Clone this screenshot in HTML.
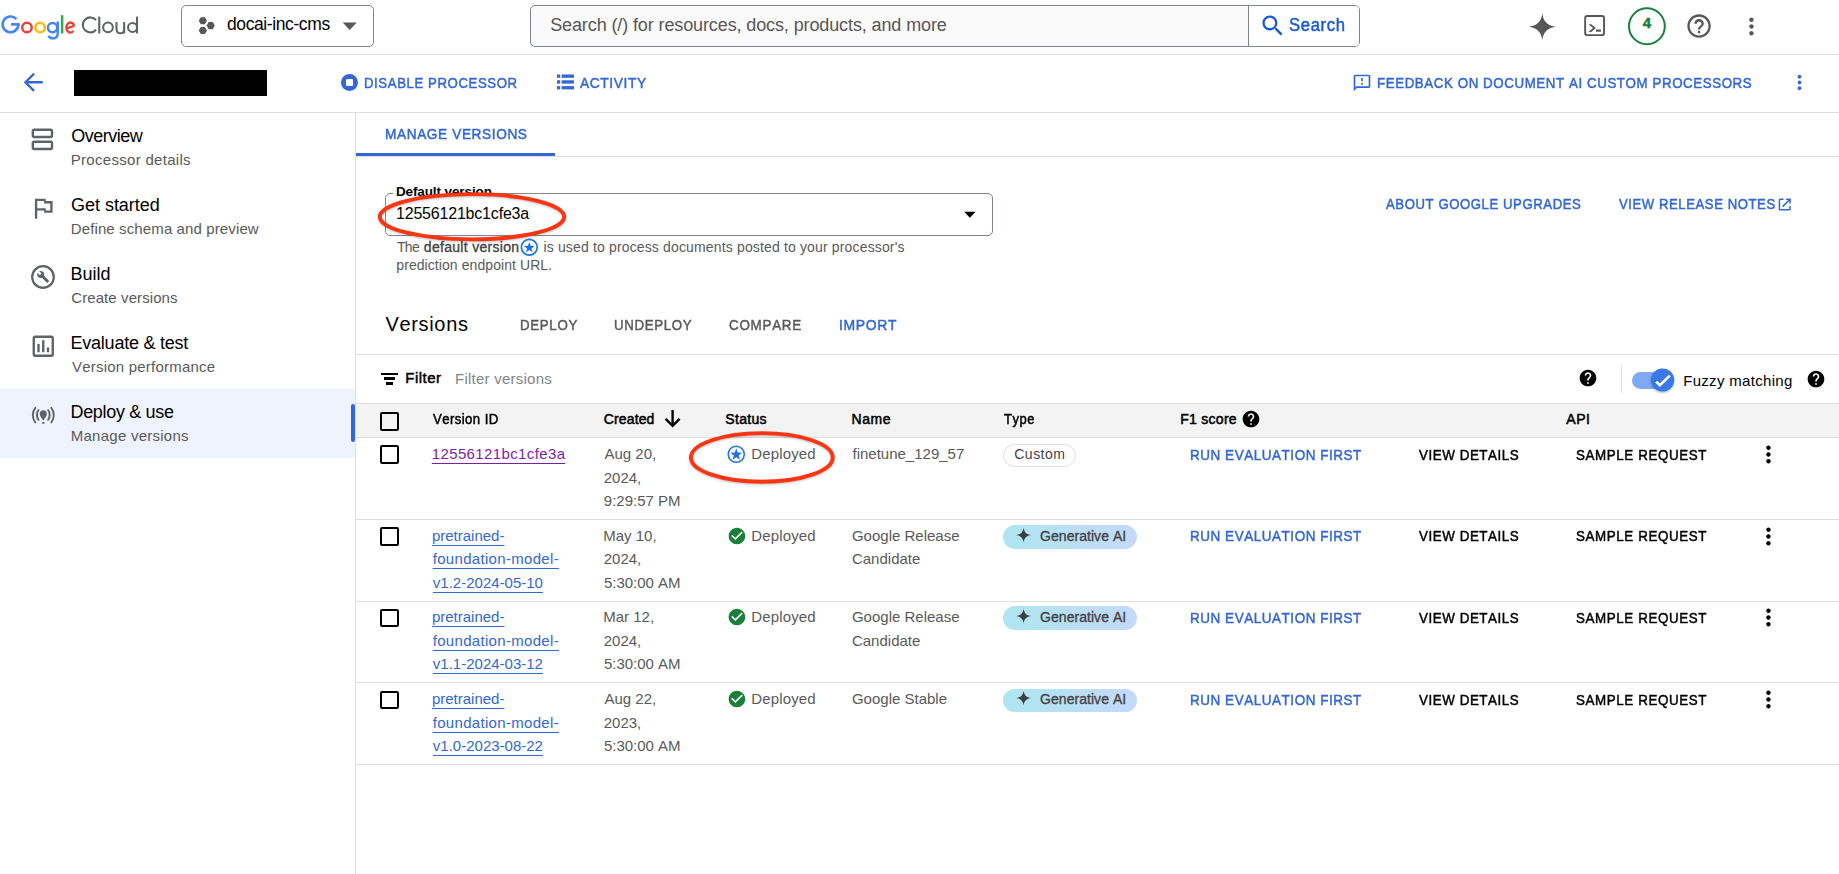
<!DOCTYPE html>
<html><head><meta charset="utf-8"><style>
html,body{margin:0;padding:0;background:#fff;width:1839px;height:874px;overflow:hidden;position:relative}
.t{position:absolute;white-space:pre;line-height:0;font-family:"Liberation Sans",sans-serif;font-kerning:none}
svg{overflow:visible}
</style></head><body>
<div style="position:absolute;left:0px;top:54px;width:1839px;height:1px;background:#dedede"></div>
<div style="position:absolute;left:0px;top:112px;width:1839px;height:1px;background:#dedede"></div>
<div style="position:absolute;left:0px;top:389px;width:355px;height:69px;background:#eef3fd"></div>
<div style="position:absolute;left:351px;top:404px;width:4px;height:38px;background:#3367d6;border-radius:2px"></div>
<div style="position:absolute;left:355px;top:113px;width:1px;height:761px;background:#dedede"></div>
<div style="position:absolute;left:181px;top:5px;width:193px;height:42px;box-sizing:border-box;border:1px solid #80868b;border-radius:5px"></div>
<div style="position:absolute;left:530px;top:5px;width:830px;height:42px;box-sizing:border-box;border:1px solid #80868b;border-radius:5px;background:#fafafa;overflow:hidden"></div>
<div style="position:absolute;left:1249px;top:6px;width:110px;height:40px;background:#fff;border-radius:0 4px 4px 0"></div>
<div style="position:absolute;left:1248px;top:6px;width:1px;height:40px;background:#80868b"></div>
<div style="position:absolute;left:356px;top:156px;width:1483px;height:1px;background:#dedede"></div>
<div style="position:absolute;left:356px;top:153px;width:199px;height:3px;background:#3367d6"></div>
<div style="position:absolute;left:385px;top:193px;width:608px;height:43px;box-sizing:border-box;border:1px solid #80868b;border-radius:5px"></div>
<div style="position:absolute;left:393px;top:190px;width:102px;height:6px;background:#fff"></div>
<div style="position:absolute;left:356px;top:354px;width:1483px;height:1px;background:#dedede"></div>
<div style="position:absolute;left:1621px;top:365px;width:1px;height:28px;background:#dedede"></div>
<div style="position:absolute;left:356px;top:403px;width:1483px;height:35px;box-sizing:border-box;background:#f3f3f3;border-top:1px solid #dedede;border-bottom:1px solid #dedede"></div>
<div style="position:absolute;left:356px;top:519px;width:1483px;height:1px;background:#dedede"></div>
<div style="position:absolute;left:356px;top:601px;width:1483px;height:1px;background:#dedede"></div>
<div style="position:absolute;left:356px;top:682px;width:1483px;height:1px;background:#dedede"></div>
<div style="position:absolute;left:356px;top:764px;width:1483px;height:1px;background:#dedede"></div>
<svg style="position:absolute;left:0px;top:0px;" width="145" height="45" viewBox="0 0 145 45"><path d="M16.42 19.06 A7.9 7.9 0 1 0 18.45 24.35" fill="none" stroke="#4285f4" stroke-width="2.6"/><rect x="11.1" y="23.05" width="8.6" height="2.6" fill="#4285f4"/><circle cx="26.95" cy="27.55" r="4.75" fill="none" stroke="#ea4335" stroke-width="2.45"/><circle cx="40.15" cy="27.55" r="4.75" fill="none" stroke="#fbbc04" stroke-width="2.45"/><circle cx="52.55" cy="27.55" r="4.65" fill="none" stroke="#4285f4" stroke-width="2.45"/><rect x="56.5" y="21.5" width="2.45" height="12.3" fill="#4285f4"/><path d="M57.72 33.5 C57.72 36.9 55.7 38.35 52.9 38.35 C50.9 38.35 49.3 37.4 48.5 35.9" fill="none" stroke="#4285f4" stroke-width="2.45"/><rect x="60.85" y="15.2" width="2.5" height="18.3" fill="#34a853"/><path d="M66.3 28.7 L74.5 25.75" fill="none" stroke="#ea4335" stroke-width="2.35"/><path d="M74.25 25.68 A4.1 5.0 0 1 0 73.50 30.90" fill="none" stroke="#ea4335" stroke-width="2.35"/><path d="M96.05 20.08 A7.5 7.5 0 1 0 96.05 29.72" fill="none" stroke="#5f6368" stroke-width="2.05"/><rect x="98.2" y="16.6" width="2.1" height="16.8" fill="#5f6368"/><circle cx="108.0" cy="27.4" r="4.85" fill="none" stroke="#5f6368" stroke-width="2.05"/><path d="M116.5 21.9 V28.4 C116.5 31.6 118.2 33.3 120.6 33.3 C123 33.3 124.15 31.6 124.15 28.4 V21.9 M124.15 28 V33.4" fill="none" stroke="#5f6368" stroke-width="2.05"/><circle cx="132.55" cy="27.4" r="4.5" fill="none" stroke="#5f6368" stroke-width="2.05"/><rect x="136" y="16.6" width="2.05" height="16.8" fill="#5f6368"/></svg>
<svg style="position:absolute;left:196px;top:14px;" width="22" height="22" viewBox="0 0 22 22"><polygon points="10.95,6.80 8.90,10.35 4.80,10.35 2.75,6.80 4.80,3.25 8.90,3.25" fill="#575757"/><polygon points="10.95,16.45 8.90,20.00 4.80,20.00 2.75,16.45 4.80,12.90 8.90,12.90" fill="#575757"/><polygon points="18.80,11.60 16.75,15.15 12.65,15.15 10.60,11.60 12.65,8.05 16.75,8.05" fill="#575757"/></svg>
<svg style="position:absolute;left:342px;top:22px;" width="15" height="9" viewBox="0 0 15 9"><polygon points="0.7,0.5 14.7,0.5 7.7,8" fill="#575757"/></svg>
<svg style="position:absolute;left:1259.2px;top:11.75px;" width="27.6" height="27.6" viewBox="0 0 24 24"><path fill="#1a5ad6" d="M15.5 14h-.79l-.28-.27C15.41 12.59 16 11.11 16 9.5 16 5.91 13.09 3 9.5 3S3 5.91 3 9.5 5.91 16 9.5 16c1.61 0 3.09-.59 4.23-1.57l.27.28v.79l5 4.99L20.49 19l-4.99-5zm-6 0C7.01 14 5 11.99 5 9.5S7.01 5 9.5 5 14 7.01 14 9.5 11.99 14 9.5 14z"/></svg>
<svg style="position:absolute;left:1529.2px;top:13.0px;" width="27" height="27.6" viewBox="0 0 27 27.6"><path fill="#575757" d="M13.3 0 C14 6.8 16.8 12.2 26.6 13.8 C16.8 15.4 14 20.8 13.3 27.6 C12.6 20.8 9.8 15.4 0 13.8 C9.8 12.2 12.6 6.8 13.3 0Z"/></svg>
<svg style="position:absolute;left:1583px;top:14px;" width="23" height="23" viewBox="0 0 23 23"><rect x="2.15" y="2.05" width="18.9" height="19.1" rx="2.2" fill="none" stroke="#575757" stroke-width="1.9"/><polygon points="5.5,10.2 8.3,10.2 12.9,14 8.3,17.9 5.5,17.9 10.0,14" fill="#575757"/><rect x="13" y="15.5" width="4.9" height="2.2" fill="#575757"/></svg>
<svg style="position:absolute;left:1627px;top:5.5px;" width="40" height="40" viewBox="0 0 40 40"><circle cx="19.9" cy="20.25" r="17.9" fill="none" stroke="#188038" stroke-width="2"/></svg>
<svg style="position:absolute;left:1685.05px;top:11.85px;" width="28.2" height="28.2" viewBox="0 0 24 24"><path fill="#575757" d="M11 18h2v-2h-2v2zm1-16C6.48 2 2 6.48 2 12s4.48 10 10 10 10-4.48 10-10S17.52 2 12 2zm0 18c-4.41 0-8-3.59-8-8s3.59-8 8-8 8 3.59 8 8-3.59 8-8 8zm0-14c-2.21 0-4 1.79-4 4h2c0-1.1.9-2 2-2s2 .9 2 2c0 2-3 1.75-3 5h2c0-2.25 3-2.5 3-5 0-2.21-1.79-4-4-4z"/></svg>
<svg style="position:absolute;left:1737.6px;top:12.8px;" width="26.9" height="26.9" viewBox="0 0 24 24"><path fill="#575757" d="M12 8c1.1 0 2-.9 2-2s-.9-2-2-2-2 .9-2 2 .9 2 2 2zm0 2c-1.1 0-2 .9-2 2s.9 2 2 2 2-.9 2-2-.9-2-2-2zm0 6c-1.1 0-2 .9-2 2s.9 2 2 2 2-.9 2-2-.9-2-2-2z"/></svg>
<svg style="position:absolute;left:19.25px;top:68.25px;" width="28.5" height="28.5" viewBox="0 0 24 24"><path fill="#3367d6" d="M20 11H7.83l5.59-5.59L12 4l-8 8 8 8 1.41-1.41L7.83 13H20v-2z"/></svg>
<div style="position:absolute;left:74px;top:70px;width:193px;height:26px;background:#000"></div>
<svg style="position:absolute;left:340px;top:73px;" width="19" height="19" viewBox="0 0 19 19"><circle cx="9.5" cy="9.5" r="8.5" fill="#3367d6"/><rect x="6" y="6" width="7" height="7" rx="1" fill="#fff"/></svg>
<svg style="position:absolute;left:557px;top:74px;" width="18" height="16" viewBox="0 0 18 16"><rect x="0" y="0.5" width="3.2" height="3.3" fill="#3367d6"/><rect x="4.6" y="0.5" width="12.4" height="3.3" fill="#3367d6"/><rect x="0" y="6.3" width="3.2" height="3.3" fill="#3367d6"/><rect x="4.6" y="6.3" width="12.4" height="3.3" fill="#3367d6"/><rect x="0" y="12.1" width="3.2" height="3.3" fill="#3367d6"/><rect x="4.6" y="12.1" width="12.4" height="3.3" fill="#3367d6"/></svg>
<svg style="position:absolute;left:1352.3px;top:73.3px;" width="20" height="20" viewBox="0 0 24 24"><path fill="#3367d6" d="M20 2H4c-1.1 0-1.99.9-1.99 2L2 22l4-4h14c1.1 0 2-.9 2-2V4c0-1.1-.9-2-2-2zm0 14H5.17l-.59.59-.58.58V4h16v12zM11 12h2v2h-2zm0-6h2v4h-2z"/></svg>
<svg style="position:absolute;left:1787.9px;top:71.2px;" width="23" height="23" viewBox="0 0 24 24"><path fill="#3367d6" d="M12 8c1.1 0 2-.9 2-2s-.9-2-2-2-2 .9-2 2 .9 2 2 2zm0 2c-1.1 0-2 .9-2 2s.9 2 2 2 2-.9 2-2-.9-2-2-2zm0 6c-1.1 0-2 .9-2 2s.9 2 2 2 2-.9 2-2-.9-2-2-2z"/></svg>
<svg style="position:absolute;left:27.8px;top:124.9px;" width="28.8" height="28.8" viewBox="0 0 24 24"><path fill="#5f6368" d="M19 13H5c-1.1 0-2 .9-2 2v4c0 1.1.9 2 2 2h14c1.1 0 2-.9 2-2v-4c0-1.1-.9-2-2-2zm0 6H5v-4h14v4zm0-16H5c-1.1 0-2 .9-2 2v4c0 1.1.9 2 2 2h14c1.1 0 2-.9 2-2V5c0-1.1-.9-2-2-2zm0 6H5V5h14v4z"/></svg>
<svg style="position:absolute;left:29.1px;top:194.2px;" width="28.3" height="28.3" viewBox="0 0 24 24"><path fill="#5f6368" fill-rule="evenodd" d="M5 4H14.2V6H20V16H12.8V14H7V21H5Z M7 6H12.8V8H18V14H14.2V12H7Z"/></svg>
<svg style="position:absolute;left:31px;top:265px;" width="24" height="24" viewBox="0 0 24 24"><circle cx="12" cy="12" r="10.8" fill="none" stroke="#5f6368" stroke-width="2.2"/><path transform="translate(5.6 5.3) scale(0.545)" fill="#5f6368" d="M22.7 19l-9.1-9.1c.9-2.3.4-5-1.5-6.9-2-2-5-2.4-7.4-1.3L9 6 6 9 1.6 4.7C.4 7.1.9 10.1 2.9 12.1c1.9 1.9 4.6 2.4 6.9 1.5l9.1 9.1c.4.4 1 .4 1.4 0l2.3-2.3c.5-.4.5-1.1.1-1.4z"/></svg>
<svg style="position:absolute;left:29px;top:331.9px;" width="28.5" height="28.5" viewBox="0 0 24 24"><path fill="#5f6368" d="M19 3H5c-1.1 0-2 .9-2 2v14c0 1.1.9 2 2 2h14c1.1 0 2-.9 2-2V5c0-1.1-.9-2-2-2zm0 16H5V5h14v14zM7 10h2v7H7zm4-3h2v10h-2zm4 6h2v4h-2z"/></svg>
<svg style="position:absolute;left:31px;top:405px;" width="25" height="20" viewBox="0 0 25 20"><path d="M4.3 2.8 C1.0 6.6 1.0 13.6 4.3 17.4 M20.3 2.8 C23.6 6.6 23.6 13.6 20.3 17.4 M7.5 5.2 C5.4 7.7 5.4 12.3 7.5 14.8 M17.1 5.2 C19.2 7.7 19.2 12.3 17.1 14.8" fill="none" stroke="#5f6368" stroke-width="1.9" stroke-linecap="round"/><path fill="#5f6368" d="M12.3 5.3 C14.5 5.3 15.9 6.9 15.9 8.9 C15.9 11.1 14 12.6 12.3 15.5 C10.6 12.6 8.7 11.1 8.7 8.9 C8.7 6.9 10.1 5.3 12.3 5.3Z"/><rect x="11.1" y="16.9" width="2.4" height="1.8" rx="0.5" fill="#5f6368"/></svg>
<svg style="position:absolute;left:963px;top:211px;" width="14" height="8" viewBox="0 0 14 8"><polygon points="1.2,0.8 12.6,0.8 6.9,6.8" fill="#000000"/></svg>
<svg style="position:absolute;left:520px;top:238.2px;" width="18.6" height="18.6" viewBox="0 0 24 24"><circle cx="12" cy="12" r="10.2" fill="none" stroke="#1a73e8" stroke-width="2.2"/><path d="M12.00 5.10 L13.76 10.07 L19.04 10.21 L14.85 13.43 L16.35 18.49 L12.00 15.50 L7.65 18.49 L9.15 13.43 L4.96 10.21 L10.24 10.07Z" fill="#1a73e8"/></svg>
<svg style="position:absolute;left:1777px;top:196.5px;" width="16" height="15" viewBox="0 0 16 15"><path d="M6.5 2.3 H3.2 C2.8 2.3 2.4 2.7 2.4 3.1 V12 C2.4 12.4 2.8 12.8 3.2 12.8 H12.2 C12.6 12.8 13 12.4 13 12 V8.9" fill="none" stroke="#3367d6" stroke-width="1.5"/><path d="M5.6 9.6 L13 2.3 M9.1 2.3 H13.05 V6.4" fill="none" stroke="#3367d6" stroke-width="1.5"/></svg>
<div style="position:absolute;left:381.4px;top:372.6px;width:16.8px;height:2.5px;background:#000"></div>
<div style="position:absolute;left:383.8px;top:377.4px;width:11.6px;height:2.4px;background:#000"></div>
<div style="position:absolute;left:386.2px;top:382.2px;width:6.8px;height:2.4px;background:#000"></div>
<svg style="position:absolute;left:1577.6299999999999px;top:367.72999999999996px;" width="20" height="20" viewBox="0 0 24 24"><path fill="#000" d="M12 2C6.48 2 2 6.48 2 12s4.48 10 10 10 10-4.48 10-10S17.52 2 12 2zm1 17h-2v-2h2v2zm2.07-7.75l-.9.92C13.45 12.9 13 13.5 13 15h-2v-.5c0-1.1.45-2.1 1.17-2.83l1.24-1.26c.37-.36.59-.86.59-1.41 0-1.1-.9-2-2-2s-2 .9-2 2H8c0-2.21 1.79-4 4-4s4 1.79 4 4c0 .88-.36 1.68-.93 2.25z"/></svg>
<svg style="position:absolute;left:1805.6299999999999px;top:368.53px;" width="20" height="20" viewBox="0 0 24 24"><path fill="#000" d="M12 2C6.48 2 2 6.48 2 12s4.48 10 10 10 10-4.48 10-10S17.52 2 12 2zm1 17h-2v-2h2v2zm2.07-7.75l-.9.92C13.45 12.9 13 13.5 13 15h-2v-.5c0-1.1.45-2.1 1.17-2.83l1.24-1.26c.37-.36.59-.86.59-1.41 0-1.1-.9-2-2-2s-2 .9-2 2H8c0-2.21 1.79-4 4-4s4 1.79 4 4c0 .88-.36 1.68-.93 2.25z"/></svg>
<svg style="position:absolute;left:1240.73px;top:408.83px;" width="20" height="20" viewBox="0 0 24 24"><path fill="#000" d="M12 2C6.48 2 2 6.48 2 12s4.48 10 10 10 10-4.48 10-10S17.52 2 12 2zm1 17h-2v-2h2v2zm2.07-7.75l-.9.92C13.45 12.9 13 13.5 13 15h-2v-.5c0-1.1.45-2.1 1.17-2.83l1.24-1.26c.37-.36.59-.86.59-1.41 0-1.1-.9-2-2-2s-2 .9-2 2H8c0-2.21 1.79-4 4-4s4 1.79 4 4c0 .88-.36 1.68-.93 2.25z"/></svg>
<div style="position:absolute;left:1632px;top:372px;width:34px;height:17px;background:#7da9f5;border-radius:8.5px"></div>
<svg style="position:absolute;left:1648px;top:365px;" width="30" height="30" viewBox="0 0 30 30"><defs><filter id="sh" x="-30%" y="-30%" width="160%" height="160%"><feDropShadow dx="0" dy="1" stdDeviation="1" flood-opacity="0.3"/></filter></defs><circle cx="14.6" cy="15" r="11.6" fill="#3b78e7" filter="url(#sh)"/><path d="M8.1 16.6 L11.9 20.3 L21.8 10.6" fill="none" stroke="#fff" stroke-width="2.6"/></svg>
<svg style="position:absolute;left:660px;top:405px;" width="25" height="25" viewBox="0 0 25 25"><path d="M12.6 5 V20.2" stroke="#000" stroke-width="2.4" fill="none"/><path d="M5.6 13.9 L12.6 20.9 L19.6 13.9" stroke="#000" stroke-width="2.4" fill="none"/></svg>
<div style="position:absolute;left:380.4px;top:412.4px;width:18.4px;height:18.4px;box-sizing:border-box;border:2px solid #000000;border-radius:2px"></div>
<div style="position:absolute;left:380.4px;top:445.2px;width:18.4px;height:18.4px;box-sizing:border-box;border:2px solid #000000;border-radius:2px"></div>
<div style="position:absolute;left:380.4px;top:527.3px;width:18.4px;height:18.4px;box-sizing:border-box;border:2px solid #000000;border-radius:2px"></div>
<div style="position:absolute;left:380.4px;top:609.1px;width:18.4px;height:18.4px;box-sizing:border-box;border:2px solid #000000;border-radius:2px"></div>
<div style="position:absolute;left:380.4px;top:690.9px;width:18.4px;height:18.4px;box-sizing:border-box;border:2px solid #000000;border-radius:2px"></div>
<svg style="position:absolute;left:726.2px;top:443.6px;" width="20.5" height="20.5" viewBox="0 0 24 24"><circle cx="12" cy="12" r="9.4" fill="none" stroke="#1a73e8" stroke-width="1.8"/><path d="M12.00 5.10 L13.76 10.07 L19.04 10.21 L14.85 13.43 L16.35 18.49 L12.00 15.50 L7.65 18.49 L9.15 13.43 L4.96 10.21 L10.24 10.07Z" fill="#1a73e8"/></svg>
<div style="position:absolute;left:1002.9px;top:443.7px;width:73px;height:23px;box-sizing:border-box;border:1px solid #dedede;border-radius:12px"></div>
<svg style="position:absolute;left:1754.8999999999999px;top:440.7px;" width="26.9" height="26.9" viewBox="0 0 24 24"><path fill="#000000" d="M12 8c1.1 0 2-.9 2-2s-.9-2-2-2-2 .9-2 2 .9 2 2 2zm0 2c-1.1 0-2 .9-2 2s.9 2 2 2 2-.9 2-2-.9-2-2-2zm0 6c-1.1 0-2 .9-2 2s.9 2 2 2 2-.9 2-2-.9-2-2-2z"/></svg>
<svg style="position:absolute;left:726.74px;top:525.84px;" width="19.9" height="19.9" viewBox="0 0 24 24"><path d="M12 2C6.48 2 2 6.48 2 12s4.48 10 10 10 10-4.48 10-10S17.52 2 12 2zm-2 15l-5-5 1.41-1.41L10 14.17l7.59-7.59L19 8l-9 9z" fill="#188038"/></svg>
<div style="position:absolute;left:1002.9px;top:525.2px;width:134px;height:23.4px;background:linear-gradient(90deg,#aee6f0,#c5d9fb);border-radius:12px"></div>
<svg style="position:absolute;left:1015.8px;top:528.0px;" width="15.2" height="14.2" viewBox="0 0 15.2 14.2"><path fill="#3c4043" d="M7.6 0 C8.4 4.3 10.4 6.4 15.2 7.1 C10.4 7.8 8.4 9.9 7.6 14.2 C6.8 9.9 4.8 7.8 0 7.1 C4.8 6.4 6.8 4.3 7.6 0Z"/></svg>
<svg style="position:absolute;left:1754.8999999999999px;top:522.5px;" width="26.9" height="26.9" viewBox="0 0 24 24"><path fill="#000000" d="M12 8c1.1 0 2-.9 2-2s-.9-2-2-2-2 .9-2 2 .9 2 2 2zm0 2c-1.1 0-2 .9-2 2s.9 2 2 2 2-.9 2-2-.9-2-2-2zm0 6c-1.1 0-2 .9-2 2s.9 2 2 2 2-.9 2-2-.9-2-2-2z"/></svg>
<svg style="position:absolute;left:726.74px;top:607.0400000000001px;" width="19.9" height="19.9" viewBox="0 0 24 24"><path d="M12 2C6.48 2 2 6.48 2 12s4.48 10 10 10 10-4.48 10-10S17.52 2 12 2zm-2 15l-5-5 1.41-1.41L10 14.17l7.59-7.59L19 8l-9 9z" fill="#188038"/></svg>
<div style="position:absolute;left:1002.9px;top:606.4000000000001px;width:134px;height:23.4px;background:linear-gradient(90deg,#aee6f0,#c5d9fb);border-radius:12px"></div>
<svg style="position:absolute;left:1015.8px;top:609.2px;" width="15.2" height="14.2" viewBox="0 0 15.2 14.2"><path fill="#3c4043" d="M7.6 0 C8.4 4.3 10.4 6.4 15.2 7.1 C10.4 7.8 8.4 9.9 7.6 14.2 C6.8 9.9 4.8 7.8 0 7.1 C4.8 6.4 6.8 4.3 7.6 0Z"/></svg>
<svg style="position:absolute;left:1754.8999999999999px;top:603.7px;" width="26.9" height="26.9" viewBox="0 0 24 24"><path fill="#000000" d="M12 8c1.1 0 2-.9 2-2s-.9-2-2-2-2 .9-2 2 .9 2 2 2zm0 2c-1.1 0-2 .9-2 2s.9 2 2 2 2-.9 2-2-.9-2-2-2zm0 6c-1.1 0-2 .9-2 2s.9 2 2 2 2-.9 2-2-.9-2-2-2z"/></svg>
<svg style="position:absolute;left:726.74px;top:689.14px;" width="19.9" height="19.9" viewBox="0 0 24 24"><path d="M12 2C6.48 2 2 6.48 2 12s4.48 10 10 10 10-4.48 10-10S17.52 2 12 2zm-2 15l-5-5 1.41-1.41L10 14.17l7.59-7.59L19 8l-9 9z" fill="#188038"/></svg>
<div style="position:absolute;left:1002.9px;top:688.5px;width:134px;height:23.4px;background:linear-gradient(90deg,#aee6f0,#c5d9fb);border-radius:12px"></div>
<svg style="position:absolute;left:1015.8px;top:691.3px;" width="15.2" height="14.2" viewBox="0 0 15.2 14.2"><path fill="#3c4043" d="M7.6 0 C8.4 4.3 10.4 6.4 15.2 7.1 C10.4 7.8 8.4 9.9 7.6 14.2 C6.8 9.9 4.8 7.8 0 7.1 C4.8 6.4 6.8 4.3 7.6 0Z"/></svg>
<svg style="position:absolute;left:1754.8999999999999px;top:685.8px;" width="26.9" height="26.9" viewBox="0 0 24 24"><path fill="#000000" d="M12 8c1.1 0 2-.9 2-2s-.9-2-2-2-2 .9-2 2 .9 2 2 2zm0 2c-1.1 0-2 .9-2 2s.9 2 2 2 2-.9 2-2-.9-2-2-2zm0 6c-1.1 0-2 .9-2 2s.9 2 2 2 2-.9 2-2-.9-2-2-2z"/></svg>
<div class="t" style="left:226.97px;top:24.02px;font-size:17.5px;color:#000000;letter-spacing:-0.398px;">docai-inc-cms</div>
<div class="t" style="left:550.18px;top:25.02px;font-size:18px;color:#575757;letter-spacing:-0.113px;">Search (/) for resources, docs, products, and more</div>
<div class="t" style="left:1289.34px;top:25.02px;font-size:18px;color:#1a5ad6;transform:scaleX(0.9256);transform-origin:0 0;letter-spacing:0.703px;-webkit-text-stroke:0.5px #1a5ad6;">Search</div>
<div class="t" style="left:363.82px;top:82.52px;font-size:15.5px;color:#3367d6;transform:scaleX(0.8530);transform-origin:0 0;letter-spacing:0.666px;-webkit-text-stroke:0.5px #3367d6;">DISABLE PROCESSOR</div>
<div class="t" style="left:580.27px;top:82.52px;font-size:15.5px;color:#3367d6;transform:scaleX(0.8914);transform-origin:0 0;letter-spacing:0.633px;-webkit-text-stroke:0.5px #3367d6;">ACTIVITY</div>
<div class="t" style="left:1377.20px;top:82.52px;font-size:15.5px;color:#3367d6;transform:scaleX(0.8613);transform-origin:0 0;letter-spacing:0.650px;-webkit-text-stroke:0.5px #3367d6;">FEEDBACK ON DOCUMENT AI CUSTOM PROCESSORS</div>
<div class="t" style="left:71.15px;top:136.02px;font-size:18px;color:#000000;letter-spacing:-0.472px;">Overview</div>
<div class="t" style="left:70.77px;top:159.52px;font-size:15px;color:#5a5a5a;letter-spacing:0.295px;">Processor details</div>
<div class="t" style="left:71.09px;top:205.02px;font-size:18px;color:#000000;letter-spacing:-0.038px;">Get started</div>
<div class="t" style="left:70.77px;top:228.52px;font-size:15px;color:#5a5a5a;letter-spacing:0.117px;">Define schema and preview</div>
<div class="t" style="left:70.52px;top:274.02px;font-size:18px;color:#000000;">Build</div>
<div class="t" style="left:71.24px;top:297.52px;font-size:15px;color:#5a5a5a;letter-spacing:0.090px;">Create versions</div>
<div class="t" style="left:70.52px;top:343.02px;font-size:18px;color:#000000;letter-spacing:-0.233px;">Evaluate & test</div>
<div class="t" style="left:71.93px;top:366.52px;font-size:15px;color:#5a5a5a;letter-spacing:0.222px;">Version performance</div>
<div class="t" style="left:70.52px;top:412.02px;font-size:18px;color:#000000;letter-spacing:-0.326px;">Deploy & use</div>
<div class="t" style="left:70.77px;top:435.52px;font-size:15px;color:#5a5a5a;letter-spacing:0.253px;">Manage versions</div>
<div class="t" style="left:384.78px;top:133.52px;font-size:15.5px;color:#3367d6;transform:scaleX(0.8809);transform-origin:0 0;letter-spacing:0.682px;-webkit-text-stroke:0.5px #3367d6;">MANAGE VERSIONS</div>
<div class="t" style="left:395.90px;top:191.52px;font-size:13.5px;color:#000000;letter-spacing:-0.106px;font-weight:700;">Default version</div>
<div class="t" style="left:395.98px;top:213.52px;font-size:16px;color:#000000;letter-spacing:-0.194px;">12556121bc1cfe3a</div>
<div class="t" style="left:1385.87px;top:203.52px;font-size:15.5px;color:#3367d6;transform:scaleX(0.8473);transform-origin:0 0;letter-spacing:0.688px;-webkit-text-stroke:0.5px #3367d6;">ABOUT GOOGLE UPGRADES</div>
<div class="t" style="left:1619.04px;top:203.52px;font-size:15.5px;color:#3367d6;transform:scaleX(0.8481);transform-origin:0 0;letter-spacing:0.647px;-webkit-text-stroke:0.5px #3367d6;">VIEW RELEASE NOTES</div>
<div class="t" style="left:385.51px;top:324.02px;font-size:20px;color:#000000;letter-spacing:0.657px;">Versions</div>
<div class="t" style="left:519.61px;top:324.52px;font-size:15.5px;color:#5a5a5a;transform:scaleX(0.8576);transform-origin:0 0;letter-spacing:0.782px;-webkit-text-stroke:0.5px #5a5a5a;">DEPLOY</div>
<div class="t" style="left:613.88px;top:324.52px;font-size:15.5px;color:#5a5a5a;transform:scaleX(0.8565);transform-origin:0 0;letter-spacing:0.764px;-webkit-text-stroke:0.5px #5a5a5a;">UNDEPLOY</div>
<div class="t" style="left:729.32px;top:324.52px;font-size:15.5px;color:#5a5a5a;transform:scaleX(0.8665);transform-origin:0 0;letter-spacing:0.818px;-webkit-text-stroke:0.5px #5a5a5a;">COMPARE</div>
<div class="t" style="left:838.51px;top:324.52px;font-size:15.5px;color:#3367d6;transform:scaleX(0.8984);transform-origin:0 0;letter-spacing:0.747px;-webkit-text-stroke:0.5px #3367d6;">IMPORT</div>
<div class="t" style="left:405.27px;top:377.52px;font-size:15px;color:#000000;letter-spacing:0.489px;-webkit-text-stroke:0.5px #000000;">Filter</div>
<div class="t" style="left:454.97px;top:378.52px;font-size:15px;color:#80868b;letter-spacing:0.244px;">Filter versions</div>
<div class="t" style="left:1683.17px;top:380.52px;font-size:15px;color:#000000;letter-spacing:0.320px;">Fuzzy matching</div>
<div class="t" style="left:433.14px;top:419.02px;font-size:14px;color:#000000;transform:scaleX(0.9396);transform-origin:0 0;letter-spacing:0.458px;-webkit-text-stroke:0.5px #000000;">Version ID</div>
<div class="t" style="left:603.79px;top:419.02px;font-size:14px;color:#000000;letter-spacing:0.134px;-webkit-text-stroke:0.5px #000000;">Created</div>
<div class="t" style="left:725.36px;top:419.02px;font-size:14px;color:#000000;letter-spacing:0.310px;-webkit-text-stroke:0.5px #000000;">Status</div>
<div class="t" style="left:851.55px;top:419.02px;font-size:14px;color:#000000;letter-spacing:0.542px;-webkit-text-stroke:0.5px #000000;">Name</div>
<div class="t" style="left:1003.81px;top:419.02px;font-size:14px;color:#000000;transform:scaleX(0.9248);transform-origin:0 0;letter-spacing:0.642px;-webkit-text-stroke:0.5px #000000;">Type</div>
<div class="t" style="left:1180.15px;top:419.02px;font-size:14px;color:#000000;letter-spacing:0.287px;-webkit-text-stroke:0.5px #000000;">F1 score</div>
<div class="t" style="left:1566.37px;top:419.02px;font-size:14px;color:#000000;letter-spacing:0.477px;-webkit-text-stroke:0.5px #000000;">API</div>
<div class="t" style="left:431.76px;top:453.52px;font-size:15px;color:#7a1fa8;letter-spacing:0.375px;text-decoration:underline;text-underline-offset:4px;text-decoration-thickness:1px;">12556121bc1cfe3a</div>
<div class="t" style="left:604.47px;top:453.52px;font-size:15px;color:#5a5a5a;">Aug 20,</div>
<div class="t" style="left:603.75px;top:477.52px;font-size:15px;color:#5a5a5a;">2024,</div>
<div class="t" style="left:603.80px;top:500.52px;font-size:15px;color:#5a5a5a;">9:29:57 PM</div>
<div class="t" style="left:751.27px;top:453.52px;font-size:15px;color:#5a5a5a;letter-spacing:0.146px;">Deployed</div>
<div class="t" style="left:852.49px;top:453.52px;font-size:15px;color:#5a5a5a;">finetune_129_57</div>
<div class="t" style="left:1014.29px;top:454.02px;font-size:14px;color:#444444;letter-spacing:0.480px;">Custom</div>
<div class="t" style="left:1190.49px;top:454.52px;font-size:15.5px;color:#3367d6;transform:scaleX(0.8702);transform-origin:0 0;letter-spacing:0.617px;-webkit-text-stroke:0.5px #3367d6;">RUN EVALUATION FIRST</div>
<div class="t" style="left:1419.34px;top:454.52px;font-size:15.5px;color:#000000;transform:scaleX(0.8646);transform-origin:0 0;letter-spacing:0.625px;-webkit-text-stroke:0.5px #000000;">VIEW DETAILS</div>
<div class="t" style="left:1575.69px;top:454.52px;font-size:15.5px;color:#000000;transform:scaleX(0.8636);transform-origin:0 0;letter-spacing:0.693px;-webkit-text-stroke:0.5px #000000;">SAMPLE REQUEST</div>
<div class="t" style="left:431.93px;top:535.52px;font-size:15px;color:#3367d6;text-decoration:underline;text-underline-offset:4px;text-decoration-thickness:1px;">pretrained-</div>
<div class="t" style="left:432.69px;top:558.52px;font-size:15px;color:#3367d6;letter-spacing:0.317px;text-decoration:underline;text-underline-offset:4px;text-decoration-thickness:1px;">foundation-model-</div>
<div class="t" style="left:432.85px;top:582.52px;font-size:15px;color:#3367d6;text-decoration:underline;text-underline-offset:4px;text-decoration-thickness:1px;">v1.2-2024-05-10</div>
<div class="t" style="left:603.27px;top:535.52px;font-size:15px;color:#5a5a5a;">May 10,</div>
<div class="t" style="left:603.75px;top:558.52px;font-size:15px;color:#5a5a5a;">2024,</div>
<div class="t" style="left:603.90px;top:582.52px;font-size:15px;color:#5a5a5a;">5:30:00 AM</div>
<div class="t" style="left:751.27px;top:535.52px;font-size:15px;color:#5a5a5a;letter-spacing:0.146px;">Deployed</div>
<div class="t" style="left:851.95px;top:535.52px;font-size:15px;color:#5a5a5a;">Google Release</div>
<div class="t" style="left:851.94px;top:558.52px;font-size:15px;color:#5a5a5a;">Candidate</div>
<div class="t" style="left:1040.10px;top:536.02px;font-size:14px;color:#444444;letter-spacing:0.041px;-webkit-text-stroke:0.35px #444444;">Generative AI</div>
<div class="t" style="left:1190.49px;top:535.52px;font-size:15.5px;color:#3367d6;transform:scaleX(0.8702);transform-origin:0 0;letter-spacing:0.617px;-webkit-text-stroke:0.5px #3367d6;">RUN EVALUATION FIRST</div>
<div class="t" style="left:1419.34px;top:535.52px;font-size:15.5px;color:#000000;transform:scaleX(0.8646);transform-origin:0 0;letter-spacing:0.625px;-webkit-text-stroke:0.5px #000000;">VIEW DETAILS</div>
<div class="t" style="left:1575.69px;top:535.52px;font-size:15.5px;color:#000000;transform:scaleX(0.8636);transform-origin:0 0;letter-spacing:0.693px;-webkit-text-stroke:0.5px #000000;">SAMPLE REQUEST</div>
<div class="t" style="left:431.93px;top:616.52px;font-size:15px;color:#3367d6;text-decoration:underline;text-underline-offset:4px;text-decoration-thickness:1px;">pretrained-</div>
<div class="t" style="left:432.69px;top:640.52px;font-size:15px;color:#3367d6;letter-spacing:0.317px;text-decoration:underline;text-underline-offset:4px;text-decoration-thickness:1px;">foundation-model-</div>
<div class="t" style="left:432.85px;top:663.52px;font-size:15px;color:#3367d6;text-decoration:underline;text-underline-offset:4px;text-decoration-thickness:1px;">v1.1-2024-03-12</div>
<div class="t" style="left:603.27px;top:616.52px;font-size:15px;color:#5a5a5a;">Mar 12,</div>
<div class="t" style="left:603.75px;top:640.52px;font-size:15px;color:#5a5a5a;">2024,</div>
<div class="t" style="left:603.90px;top:663.52px;font-size:15px;color:#5a5a5a;">5:30:00 AM</div>
<div class="t" style="left:751.27px;top:616.52px;font-size:15px;color:#5a5a5a;letter-spacing:0.146px;">Deployed</div>
<div class="t" style="left:851.95px;top:616.52px;font-size:15px;color:#5a5a5a;">Google Release</div>
<div class="t" style="left:851.94px;top:640.52px;font-size:15px;color:#5a5a5a;">Candidate</div>
<div class="t" style="left:1040.10px;top:617.02px;font-size:14px;color:#444444;letter-spacing:0.041px;-webkit-text-stroke:0.35px #444444;">Generative AI</div>
<div class="t" style="left:1190.49px;top:617.52px;font-size:15.5px;color:#3367d6;transform:scaleX(0.8702);transform-origin:0 0;letter-spacing:0.617px;-webkit-text-stroke:0.5px #3367d6;">RUN EVALUATION FIRST</div>
<div class="t" style="left:1419.34px;top:617.52px;font-size:15.5px;color:#000000;transform:scaleX(0.8646);transform-origin:0 0;letter-spacing:0.625px;-webkit-text-stroke:0.5px #000000;">VIEW DETAILS</div>
<div class="t" style="left:1575.69px;top:617.52px;font-size:15.5px;color:#000000;transform:scaleX(0.8636);transform-origin:0 0;letter-spacing:0.693px;-webkit-text-stroke:0.5px #000000;">SAMPLE REQUEST</div>
<div class="t" style="left:431.93px;top:698.52px;font-size:15px;color:#3367d6;text-decoration:underline;text-underline-offset:4px;text-decoration-thickness:1px;">pretrained-</div>
<div class="t" style="left:432.69px;top:722.52px;font-size:15px;color:#3367d6;letter-spacing:0.317px;text-decoration:underline;text-underline-offset:4px;text-decoration-thickness:1px;">foundation-model-</div>
<div class="t" style="left:432.85px;top:745.52px;font-size:15px;color:#3367d6;text-decoration:underline;text-underline-offset:4px;text-decoration-thickness:1px;">v1.0-2023-08-22</div>
<div class="t" style="left:604.47px;top:698.52px;font-size:15px;color:#5a5a5a;">Aug 22,</div>
<div class="t" style="left:603.75px;top:722.52px;font-size:15px;color:#5a5a5a;">2023,</div>
<div class="t" style="left:603.90px;top:745.52px;font-size:15px;color:#5a5a5a;">5:30:00 AM</div>
<div class="t" style="left:751.27px;top:698.52px;font-size:15px;color:#5a5a5a;letter-spacing:0.146px;">Deployed</div>
<div class="t" style="left:851.95px;top:698.52px;font-size:15px;color:#5a5a5a;">Google Stable</div>
<div class="t" style="left:1040.10px;top:699.02px;font-size:14px;color:#444444;letter-spacing:0.041px;-webkit-text-stroke:0.35px #444444;">Generative AI</div>
<div class="t" style="left:1190.49px;top:699.52px;font-size:15.5px;color:#3367d6;transform:scaleX(0.8702);transform-origin:0 0;letter-spacing:0.617px;-webkit-text-stroke:0.5px #3367d6;">RUN EVALUATION FIRST</div>
<div class="t" style="left:1419.34px;top:699.52px;font-size:15.5px;color:#000000;transform:scaleX(0.8646);transform-origin:0 0;letter-spacing:0.625px;-webkit-text-stroke:0.5px #000000;">VIEW DETAILS</div>
<div class="t" style="left:1575.69px;top:699.52px;font-size:15.5px;color:#000000;transform:scaleX(0.8636);transform-origin:0 0;letter-spacing:0.693px;-webkit-text-stroke:0.5px #000000;">SAMPLE REQUEST</div>
<div class="t" style="left:396.89px;top:247.02px;font-size:14px;color:#5a5a5a;letter-spacing:-0.594px;">The</div>
<div class="t" style="left:423.81px;top:247.02px;font-size:14px;color:#444444;letter-spacing:0.303px;-webkit-text-stroke:0.35px #444444;">default version</div>
<div class="t" style="left:543.46px;top:247.02px;font-size:14px;color:#5a5a5a;letter-spacing:0.152px;">is used to process documents posted to your processor's</div>
<div class="t" style="left:396.30px;top:265.02px;font-size:14px;color:#5a5a5a;letter-spacing:0.073px;">prediction endpoint URL.</div>
<div class="t" style="left:1642.77px;top:22.52px;font-size:15px;color:#188038;font-weight:700;-webkit-text-stroke:0.5px #188038;">4</div>
<svg style="position:absolute;left:360px;top:180px;filter:drop-shadow(0 1px 1px rgba(0,0,0,0.25))" width="230" height="75" viewBox="0 0 230 75"><ellipse cx="112" cy="36.75" rx="92.2" ry="22.6" fill="none" stroke="#fc3511" stroke-width="3.9"/></svg>
<svg style="position:absolute;left:670px;top:420px;filter:drop-shadow(0 1px 1px rgba(0,0,0,0.25))" width="185" height="80" viewBox="0 0 185 80"><ellipse cx="91.85" cy="37.45" rx="70.9" ry="24.3" fill="none" stroke="#fc3511" stroke-width="3.9"/></svg>
</body></html>
